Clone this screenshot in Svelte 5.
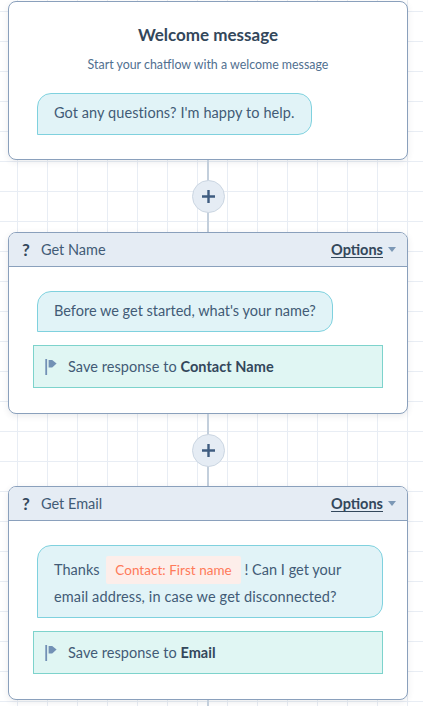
<script>
  const pole = 'M0.3 0h1.8v16H0.3z';
  const pennant = 'M3.6 1 L7.2 1 L11.6 4.6 L7.2 8.4 L3.6 8.4z';
</script>

<div class="canvas">
  <section class="card intro">
    <h1>Welcome message</h1>
    <p class="sub">Start your chatflow with a welcome message</p>
    <div class="bubble first">Got any questions? I'm happy to help.</div>
  </section>

  <div class="connector">
    <button class="add" aria-label="Add step">
      <svg viewBox="0 0 13 13" width="13" height="13"><path d="M6.5 0v13M0 6.5h13" /></svg>
    </button>
  </div>

  <section class="card">
    <header>
      <span class="q">?</span>
      <span class="name">Get Name</span>
      <span class="options">Options</span>
      <span class="caret"></span>
    </header>
    <div class="body">
      <div class="bubble">Before we get started, what's your name?</div>
      <div class="save">
        <svg viewBox="0 0 12 16" width="12" height="16"><path d={pole} /><path d={pennant} /></svg>
        <span>Save response to <b>Contact Name</b></span>
      </div>
    </div>
  </section>

  <div class="connector">
    <button class="add" aria-label="Add step">
      <svg viewBox="0 0 13 13" width="13" height="13"><path d="M6.5 0v13M0 6.5h13" /></svg>
    </button>
  </div>

  <section class="card">
    <header>
      <span class="q">?</span>
      <span class="name">Get Email</span>
      <span class="options">Options</span>
      <span class="caret"></span>
    </header>
    <div class="body">
      <div class="bubble wide">
        <div class="line1">Thanks <span class="token">Contact: First name</span> ! Can I get your</div>
        <div class="line2">email address, in case we get disconnected?</div>
      </div>
      <div class="save">
        <svg viewBox="0 0 12 16" width="12" height="16"><path d={pole} /><path d={pennant} /></svg>
        <span>Save response to <b>Email</b></span>
      </div>
    </div>
  </section>

  <div class="tail"></div>
</div>

<style>
  :global(body) {
    margin: 0;
    overflow: hidden;
  }
  .canvas {
    box-sizing: border-box;
    width: 423px;
    height: 706px;
    overflow: hidden;
    padding: 1px 15px 0 8px;
    background-color: #fff;
    background-image:
      linear-gradient(to right, #e8edf4 1.5px, transparent 1.5px),
      linear-gradient(to bottom, #e8edf4 1.5px, transparent 1.5px);
    background-size: 30px 30px;
    background-position: 17px 11px;
    font-family: Lato, "Noto Sans", sans-serif;
    color: #33475b;
  }
  .card {
    box-sizing: border-box;
    width: 400px;
    background: #fff;
    border: 1px solid #8aa0bc;
    border-radius: 8px;
    box-shadow: 0 2px 6px rgba(45, 62, 80, 0.10);
    overflow: hidden;
  }
  .intro {
    height: 159px;
    padding: 23px 28px 0;
  }
  h1 {
    margin: 0;
    text-align: center;
    font-size: 17px;
    line-height: 20px;
    font-weight: 700;
    color: #33475b;
  }
  .sub {
    margin: 11px 0 0;
    text-align: center;
    font-size: 12.4px;
    line-height: 18px;
    color: #516f90;
  }
  .bubble {
    box-sizing: border-box;
    width: fit-content;
    min-height: 41px;
    padding: 9px 16px;
    font-size: 14.5px;
    line-height: 20px;
    background: #e1f3f7;
    border: 1px solid #7fd1de;
    border-radius: 14px 14px 14px 0;
    color: #425b76;
  }
  .intro .bubble {
    margin-top: 19px;
    min-height: 42px;
  }
  .first {
    letter-spacing: 0.08px;
  }
  header {
    box-sizing: border-box;
    height: 34px;
    display: flex;
    align-items: center;
    padding: 0 11px 0 13px;
    background: #e5ecf4;
    border-bottom: 1px solid #8aa0bc;
    font-size: 14.5px;
  }
  .q {
    width: 19px;
    font-weight: 700;
    font-size: 17px;
    color: #33475b;
  }
  .name {
    flex: 1;
    color: #425b76;
  }
  .options {
    font-weight: 700;
    font-size: 14.5px;
    color: #33475b;
    text-decoration: underline;
    text-underline-offset: 2px;
  }
  .caret {
    margin-left: 5px;
    border-left: 4.5px solid transparent;
    border-right: 4.5px solid transparent;
    border-top: 5px solid #7c98b6;
  }
  .body {
    padding: 24px 24px 25px;
  }
  .body .bubble {
    margin-left: 4px;
  }
  .wide {
    width: 346px;
    padding: 10px 16px;
    height: 73px;
  }
  .wide div {
    white-space: nowrap;
  }
  .line1 {
    line-height: 28px;
    height: 28px;
    letter-spacing: 0.02px;
  }
  .line2 {
    margin-top: 3px;
    letter-spacing: 0.12px;
  }
  .token {
    display: inline-block;
    box-sizing: border-box;
    height: 28px;
    line-height: 28px;
    vertical-align: top;
    margin: 0 0 0 3px;
    padding: 0 9px;
    background: #fdeeea;
    color: #ff7a59;
    font-size: 13.5px;
    border-radius: 2px;
  }
  .save {
    box-sizing: border-box;
    width: 350px;
    height: 43px;
    margin-top: 13px;
    display: flex;
    align-items: center;
    gap: 11px;
    padding: 0 11px;
    background: #e0f6f3;
    border: 1px solid #7dd3cc;
    font-size: 14.5px;
    letter-spacing: 0.05px;
    color: #425b76;
  }
  .save b {
    color: #33475b;
  }
  .save svg {
    fill: #7291b5;
    flex: none;
  }
  .connector {
    width: 400px;
    height: 72px;
    display: flex;
    align-items: center;
    justify-content: center;
    background: linear-gradient(#c3cfdc, #c3cfdc) no-repeat 199px 0 / 2px 100%;
  }
  .add {
    box-sizing: border-box;
    width: 33px;
    height: 33px;
    padding: 0;
    border-radius: 50%;
    display: flex;
    align-items: center;
    justify-content: center;
    background: #e5ecf4;
    border: 1px solid #cbd6e2;
  }
  .add svg path {
    stroke: #3f5c80;
    stroke-width: 2.4;
    fill: none;
  }
  .tail {
    width: 2px;
    height: 10px;
    margin-left: 199px;
    background: #c3cfdc;
  }
</style>
